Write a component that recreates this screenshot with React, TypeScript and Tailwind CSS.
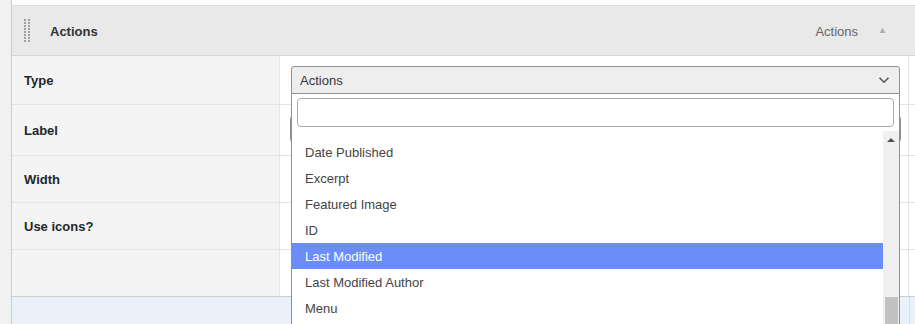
import React from "react";

const font = { fontFamily: '"Liberation Sans", Arial, sans-serif' };

function Row({ label, h, children }: { label: string; h: string; children?: React.ReactNode }) {
  return (
    <div className={`flex ${h} border-b border-[#e5e5e5]`}>
      <div className="w-[268px] shrink-0 bg-[#f4f4f4] border-r border-[#e5e5e5] flex items-center pl-3 pt-[2px] text-[13px] font-bold text-[#23282d]">
        {label}
      </div>
      <div className="w-[629px] shrink-0 relative border-r border-[#e5e5e5]">{children}</div>
      <div className="flex-1 bg-white" />
    </div>
  );
}

export default function App() {
  const items = [
    "Date Published",
    "Excerpt",
    "Featured Image",
    "ID",
    "Last Modified",
    "Last Modified Author",
    "Menu",
  ];
  return (
    <div className="relative w-[915px] h-[324px] overflow-hidden bg-white flex" style={font}>
      <div className="w-[12px] shrink-0 bg-[#f1f1f1] border-r border-[#cccccc]" />
      <div className="flex-1 flex flex-col">
        <div className="h-[6px] bg-white border-b border-[#dcdcdc]" />
        <div className="h-[50px] bg-[#e9e9e9] border-b border-[#d4d4d4] flex items-center">
          <div className="ml-[12px] grid grid-cols-2 gap-x-[2px] gap-y-[1px]">
            {Array.from({ length: 16 }).map((_, i) => (
              <span key={i} className="block w-[2px] h-[2px] bg-[#a0a0a0]" />
            ))}
          </div>
          <span className="ml-[20px] pt-[3px] text-[13px] font-bold text-[#333]">Actions</span>
          <span className="ml-auto pt-[3px] text-[13px] text-[#666]">Actions</span>
          <span className="ml-[20px] mr-[28px] text-[9px] text-[#aaa] leading-none">▲</span>
        </div>
        <Row label="Type" h="h-[49px]" />
        <Row label="Label" h="h-[51px]">
          <div className="absolute left-[10px] top-[10px] w-[611px] h-[28px] border border-[#8c8f94] rounded-[4px] bg-white" />
        </Row>
        <Row label="Width" h="h-[47px]" />
        <Row label="Use icons?" h="h-[47px]" />
        <div className="flex h-[46px]">
          <div className="w-[268px] shrink-0 bg-[#f4f4f4] border-r border-[#e5e5e5]" />
          <div className="w-[629px] shrink-0 border-r border-[#e5e5e5]" />
          <div className="flex-1" />
        </div>
        <div className="flex-1 bg-[#eaf1fb] border-t border-[#cccccc] flex">
          <div className="w-[898px] shrink-0 border-r border-[#dcdcdc]" />
        </div>
      </div>

      {/* open select2 */}
      <div className="absolute left-[291px] top-[66px] w-[609px] bottom-0 flex flex-col">
        <div className="h-[28px] bg-[#eeeeee] border border-[#8c8f94] rounded-t-[3px] flex items-center pl-[8px] pr-[8px] text-[13px] text-[#32373c]">
          <span className="pt-[1px]">Actions</span>
          <svg className="ml-auto" width="14" height="14" viewBox="0 0 14 14" fill="none">
            <path d="M2.5 4.8 L7 9.2 L11.5 4.8" stroke="#50575e" strokeWidth="1.6" />
          </svg>
        </div>
        <div className="flex-1 bg-white border-x border-[#8c8f94] flex flex-col overflow-hidden">
          <div className="px-[5px] pt-[4px]">
            <div className="h-[29px] border border-[#aaaaaa] rounded-[4px]" />
          </div>
          <div className="flex flex-1 mt-[4px] overflow-hidden">
            <div className="flex-1 overflow-hidden">
              <div className="mt-[8px]">
                {items.map((t) => (
                  <div
                    key={t}
                    className={`h-[26px] flex items-center pl-[13px] pt-[1px] text-[13px] ${
                      t === "Last Modified" ? "bg-[#6a8dfa] text-white" : "text-[#444]"
                    }`}
                  >
                    {t}
                  </div>
                ))}
              </div>
            </div>
            <div className="w-[16px] shrink-0 bg-[#f0f0f0] relative">
              <div className="absolute left-[4px] top-[7px] w-0 h-0 border-l-[4px] border-r-[4px] border-b-[4px] border-l-transparent border-r-transparent border-b-[#505050]" />
              <div className="absolute left-[2px] right-[1px] top-[166px] bottom-0 bg-[#c1c1c1]" />
            </div>
          </div>
        </div>
      </div>
    </div>
  );
}
